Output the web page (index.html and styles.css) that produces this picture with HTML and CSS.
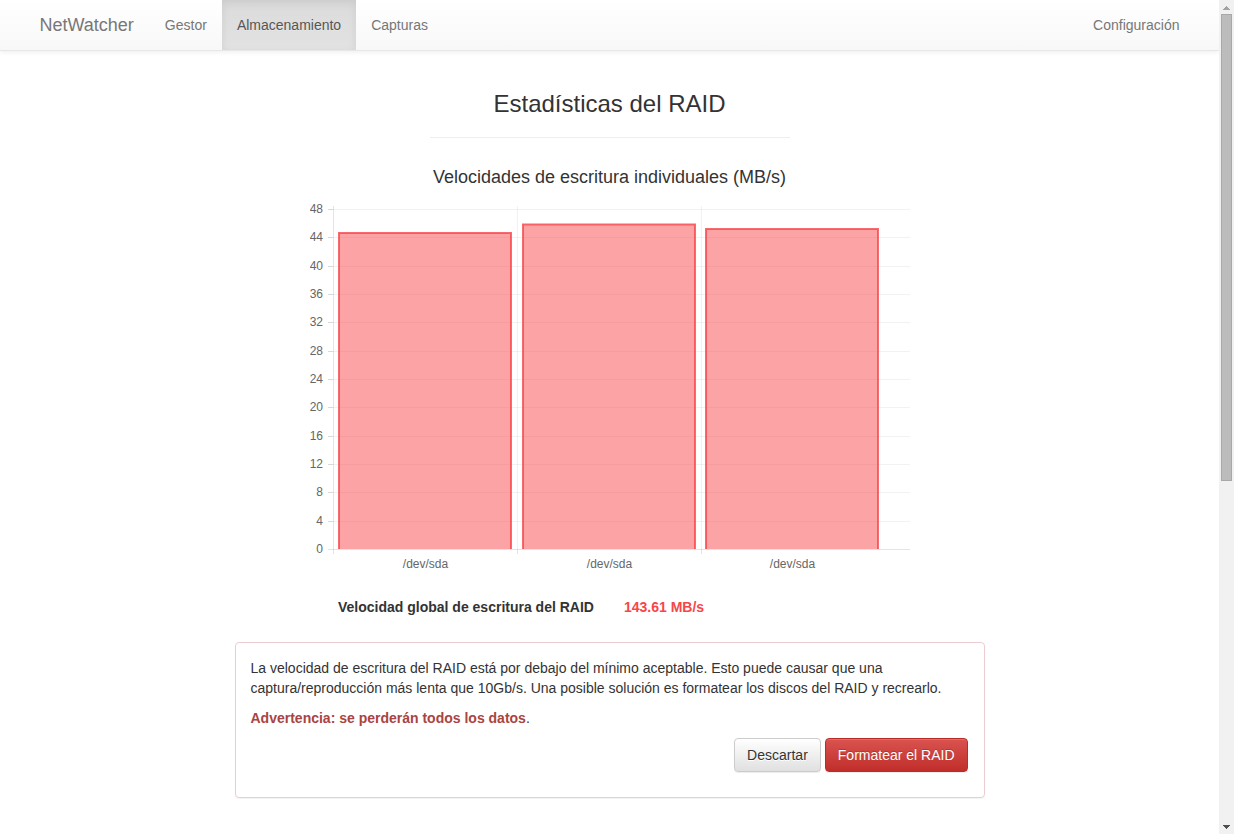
FILE: index.html
```html
<!DOCTYPE html>
<html lang="es">
<head>
<meta charset="utf-8">
<title>NetWatcher - Almacenamiento</title>
<link rel="stylesheet" href="styles.css">
</head>
<body>
<div class="page">
  <header class="navbar">
    <nav class="navbar-inner">
      <a class="brand" href="#">NetWatcher</a>
      <a class="nav-link" href="#">Gestor</a>
      <a class="nav-link active" href="#">Almacenamiento</a>
      <a class="nav-link" href="#">Capturas</a>
      <a class="nav-link nav-right" href="#">Configuración</a>
    </nav>
  </header>
  <main class="content">
    <h1 class="title">Estadísticas del RAID</h1>
    <hr class="divider">
    <h2 class="subtitle">Velocidades de escritura individuales (MB/s)</h2>
    <svg class="chart" viewBox="0 0 600 375" role="img" aria-label="Velocidades de escritura individuales">
      <g class="grid">
        <path d="M18 9.500H600M18 37.500H600M18 66.500H600M18 94.500H600M18 122.500H600M18 151.500H600M18 179.500H600M18 207.500H600M18 236.500H600M18 264.500H600M18 292.500H600M18 321.500H600"/>
        <path d="M207.500 6V349M391.500 6V349"/>
      </g>
      <path class="axis" d="M18 9.500H23M18 37.500H23M18 66.500H23M18 94.500H23M18 122.500H23M18 151.500H23M18 179.500H23M18 207.500H23M18 236.500H23M18 264.500H23M18 292.500H23M18 321.500H23M18 349.500H600M23.500 6V354M207.500 349V354M391.500 349V354"/>
      <g class="bars">
        <path d="M29 349V33H201V349"/>
        <path d="M213 349V24.400H385V349"/>
        <path d="M396 349V28.900H568V349"/>
      </g>
      <g class="tick-y">
        <text x="13" y="13">48</text>
        <text x="13" y="41">44</text>
        <text x="13" y="70">40</text>
        <text x="13" y="98">36</text>
        <text x="13" y="126">32</text>
        <text x="13" y="155">28</text>
        <text x="13" y="183">24</text>
        <text x="13" y="211">20</text>
        <text x="13" y="240">16</text>
        <text x="13" y="268">12</text>
        <text x="13" y="296">8</text>
        <text x="13" y="325">4</text>
        <text x="13" y="353">0</text>
      </g>
      <g class="tick-x">
        <text x="115.500" y="368">/dev/sda</text>
        <text x="299.500" y="368">/dev/sda</text>
        <text x="482.500" y="368">/dev/sda</text>
      </g>
    </svg>
    <div class="total">
      <span>Velocidad global de escritura del RAID</span>
      <span class="total-value">143.61 MB/s</span>
    </div>
    <section class="panel">
      <p>La velocidad de escritura del RAID está por debajo del mínimo aceptable. Esto puede causar que una captura/reproducción más lenta que 10Gb/s. Una posible solución es formatear los discos del RAID y recrearlo.</p>
      <p class="warning"><strong>Advertencia: se perderán todos los datos</strong>.</p>
      <div class="actions">
        <button class="btn btn-default" type="button">Descartar</button>
        <button class="btn btn-danger" type="button">Formatear el RAID</button>
      </div>
    </section>
  </main>
</div>
<div class="scrollbar" aria-hidden="true">
  <svg class="arrow" viewBox="0 0 15 14"><path fill="#a3a3a3" d="M7 6h1v1h1v1h1v1h1v1H4V9h1V8h1V7h1z"/></svg>
  <div class="track"><div class="thumb"></div></div>
  <svg class="arrow" viewBox="0 0 15 14"><path fill="#505050" d="M4 5h7v1h-1v1H9v1H8v1H7V8H6V7H5V6H4z"/></svg>
</div>
</body>
</html>
```
FILE: styles.css
```css
* { box-sizing: border-box; }

body {
  display: flex;
  height: 100vh;
  margin: 0;
  overflow: hidden;
  background: #fff;
  color: #333;
  font: 14px/20px "Liberation Sans", Arial, sans-serif;
}

.page { flex: 1; min-width: 0; overflow: hidden; }

.navbar {
  border-bottom: 1px solid #e7e7e7;
  background: linear-gradient(#fff, #f8f8f8);
  box-shadow: 0 1px 5px rgba(0, 0, 0, .075);
}
.navbar-inner {
  display: flex;
  max-width: 1170px;
  margin: 0 auto;
}
.brand, .nav-link {
  padding: 15px;
  color: #777;
  text-decoration: none;
  text-shadow: 0 1px 0 rgba(255, 255, 255, .25);
}
.brand { padding-right: 16px; font-size: 18px; }
.nav-link.active {
  color: #555;
  background: linear-gradient(#dbdbdb, #e2e2e2);
  box-shadow: inset 0 3px 9px rgba(0, 0, 0, .075);
}
.nav-right { margin-left: auto; }

.content {
  display: flex;
  flex-direction: column;
  align-items: center;
  max-width: 750px;
  margin: 0 auto;
  padding-top: 40px;
}
.title, .subtitle { margin: 0; font-weight: 400; text-align: center; }
.title { font-size: 24px; line-height: 26px; }
.divider {
  width: 360px;
  max-width: 100%;
  margin: 20px 0 29px;
  border: 0;
  border-top: 1px solid #eee;
}
.subtitle { font-size: 18px; line-height: 20px; }

.chart {
  width: 100%;
  max-width: 600px;
  margin: 13px 0 22px;
  font-size: 12px;
}
.grid path { fill: none; stroke: rgba(0, 0, 0, .05); }
.axis { fill: none; stroke: rgba(0, 0, 0, .1); }
.bars path {
  fill: rgba(250, 72, 77, .5);
  stroke: rgba(247, 70, 74, .8);
  stroke-width: 2;
}
.tick-y, .tick-x { fill: #666; }
.tick-y { text-anchor: end; }
.tick-x { text-anchor: middle; }

.total {
  display: flex;
  gap: 30px;
  width: 100%;
  max-width: 543px;
  margin-bottom: 25px;
  font-weight: 700;
}
.total-value { color: #f7464a; }

.panel {
  width: 100%;
  padding: 15px 16px 25px 15px;
  border: 1px solid #ebccd1;
  border-radius: 4px;
  box-shadow: 0 1px 1px rgba(0, 0, 0, .05);
}
.panel p { margin: 0 0 10px; }
.warning strong { color: #a94442; }
.actions { display: flex; justify-content: flex-end; gap: 4px; }
.btn {
  padding: 6px 12px;
  border: 1px solid;
  border-radius: 4px;
  font: inherit;
  box-shadow: inset 0 1px 0 rgba(255, 255, 255, .15), 0 1px 1px rgba(0, 0, 0, .075);
}
.btn-default {
  border-color: #ccc;
  background: linear-gradient(#fff, #e0e0e0);
  color: #333;
  text-shadow: 0 1px 0 #fff;
}
.btn-danger {
  border-color: #b92c28;
  background: linear-gradient(#d9534f, #c12e2a);
  color: #fff;
  text-shadow: 0 -1px 0 rgba(0, 0, 0, .2);
}

.scrollbar {
  display: flex;
  flex-direction: column;
  width: 15px;
  background: #f1f1f1;
}
.arrow { width: 15px; height: 14px; shape-rendering: crispEdges; }
.track { flex: 1; padding: 0 2px; }
.thumb {
  height: 58%;
  border: 1px solid #a8a8a8;
  background: #bcbcbc;
}
```
